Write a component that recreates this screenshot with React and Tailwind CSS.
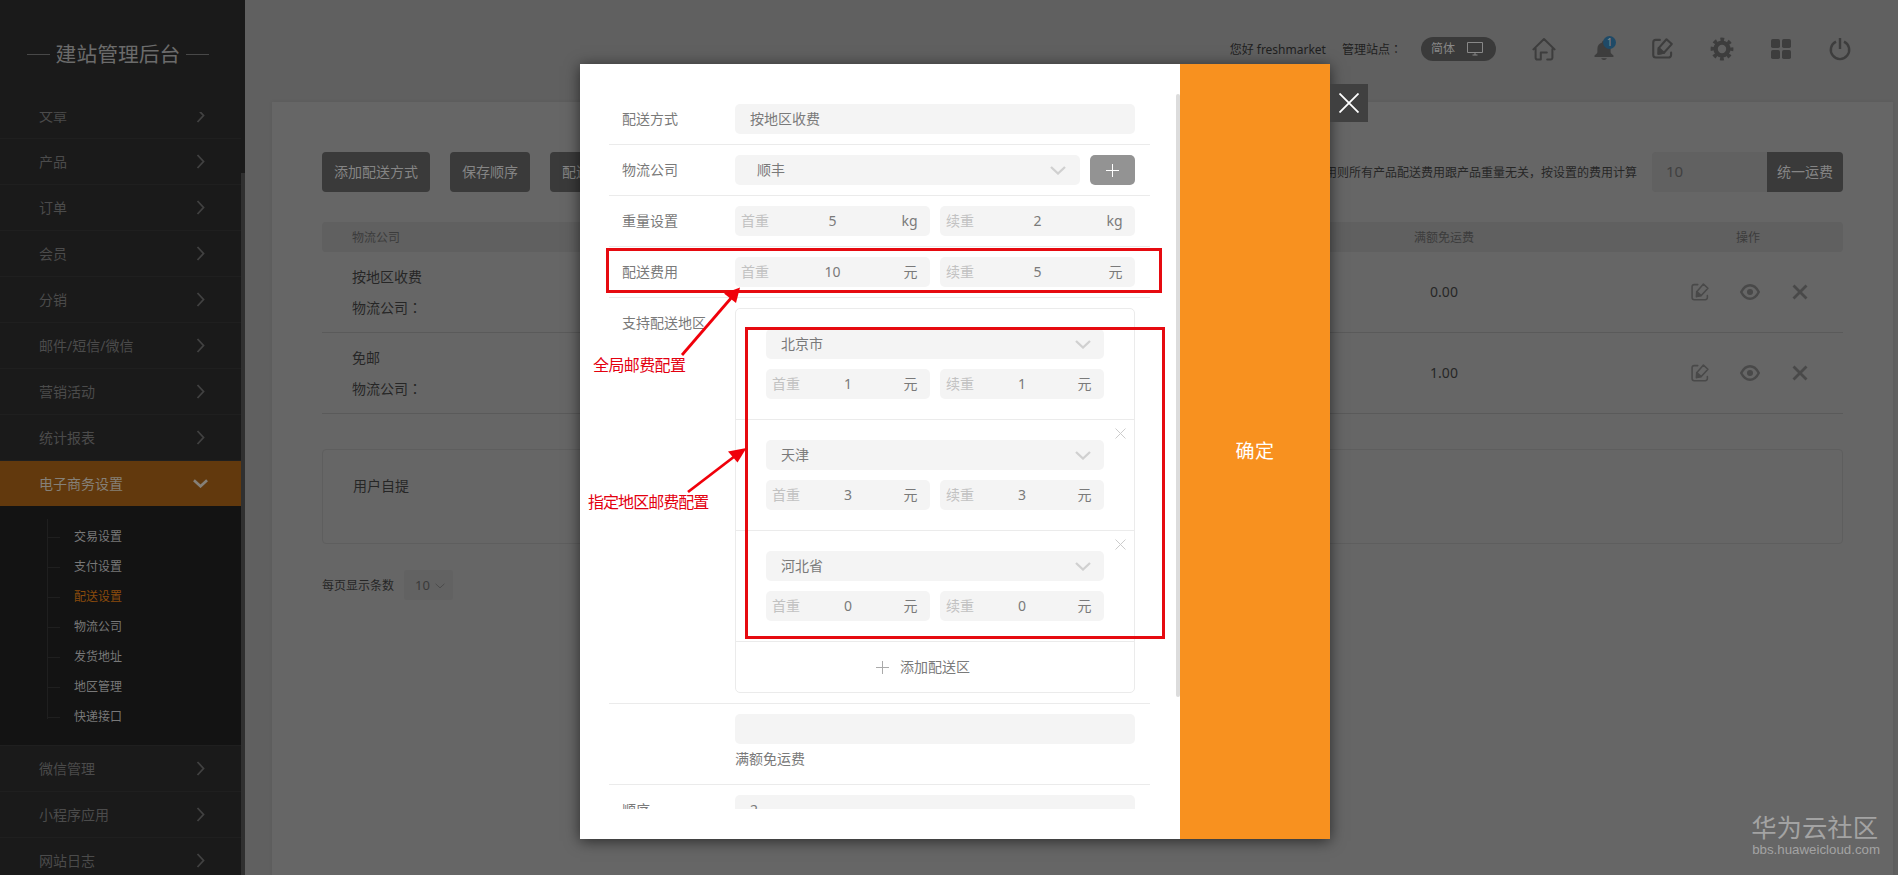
import React from "react";

const MENU_TOP = ["文章", "产品", "订单", "会员", "分销", "邮件/短信/微信", "营销活动", "统计报表"];
const SUB_MENU = ["交易设置", "支付设置", "配送设置", "物流公司", "发货地址", "地区管理", "快递接口"];
const MENU_BOTTOM = ["微信管理", "小程序应用", "网站日志"];

const METHODS = [
  { name: "按地区收费", free: "0.00" },
  { name: "免邮", free: "1.00" },
];

const REGIONS = [
  { name: "北京市", first: "1", next: "1", removable: false },
  { name: "天津", first: "3", next: "3", removable: true },
  { name: "河北省", first: "0", next: "0", removable: true },
];

function ChevronDown({ className }) {
  return (
    <svg className={className} viewBox="0 0 16 9" fill="none" stroke="currentColor">
      <path d="M1 1l7 6.500L15 1" />
    </svg>
  );
}

function Colon() {
  return <span className="font-['Noto_Sans_CJK_TC',sans-serif]">：</span>;
}

function EditIcon({ className }) {
  return (
    <svg className={className} viewBox="0 0 20 20" fill="none" stroke="currentColor" strokeLinejoin="round" strokeLinecap="round">
      <path d="M7.500 1.800H3.600a2.400 2.400 0 0 0-2.400 2.400v12a2.400 2.400 0 0 0 2.400 2.400h12a2.400 2.400 0 0 0 2.600-2.400v-2.400" />
      <path d="M13.800 1.200l5 4.600-7.400 8.200-5.200 1 .2-5.400z" />
      <path d="M6.400 9.600l5 4.400-5.200 1z" fill="currentColor" />
    </svg>
  );
}

function MenuItem({ label }) {
  return (
    <li className="flex h-[46px] shrink-0 items-center justify-between border-b border-[#1f1f1f] pl-[39px] pr-[36px] text-sm text-[#4b4b4b]">
      <span>{label}</span>
      <svg className="mb-px h-[15px] w-[9px]" viewBox="0 0 9 15" fill="none" stroke="#414141" strokeWidth="1.800">
        <path d="M1.500 1l6 6.500-6 6.500" />
      </svg>
    </li>
  );
}

function Sidebar() {
  return (
    <aside className="relative flex h-full w-[245px] shrink-0 flex-col bg-[#1a1a1a]">
      <div className="flex h-[112px] shrink-0 items-start pl-[27px] pt-[39px]">
        <div className="flex items-center text-[#6b6b6b]">
          <i className="h-px w-[23px] bg-[#484848]" />
          <h1 className="w-[136px] text-center text-[20.800px] leading-[30px]">建站管理后台</h1>
          <i className="h-px w-[23px] bg-[#484848]" />
        </div>
      </div>
      <div className="min-h-0 flex-1 overflow-hidden">
        <ul className="-mt-[19px] flex w-[241px] flex-col">
          {MENU_TOP.map((m) => (
            <MenuItem key={m} label={m} />
          ))}
          <li className="flex h-[45px] w-[245px] shrink-0 items-center justify-between bg-[#62390d] pl-[39px] pr-[37px] text-sm text-[#858078]">
            <span>电子商务设置</span>
            <ChevronDown className="h-[9px] w-[15px] stroke-[2.800]" />
          </li>
          <li className="h-[239px] shrink-0 bg-[#131313] pt-[16px]">
            <ul className="relative text-xs text-[#787878]">
              <i className="absolute left-[47px] top-[-3px] h-[200px] w-px bg-[#1f1f1f]" />
              {SUB_MENU.map((s) => (
                <li key={s} className="flex h-[30px] items-center pl-[48px]">
                  <i className="mr-[14px] h-px w-3 bg-[#1f1f1f]" />
                  <span className={s === "配送设置" ? "text-[#8a4b0c]" : ""}>{s}</span>
                </li>
              ))}
            </ul>
          </li>
          <li className="h-px shrink-0 bg-[#1f1f1f]" />
          {MENU_BOTTOM.map((m) => (
            <MenuItem key={m} label={m} />
          ))}
        </ul>
      </div>
      <i className="absolute bottom-0 right-0 top-[173px] w-1 bg-[#303030]" />
    </aside>
  );
}

function TopBar() {
  return (
    <header className="flex h-[99px] items-center justify-end pb-[2px] pr-[46px] text-[#3d3d3d]">
      <div className="flex items-center pt-[2px] text-xs text-[#202020]">
        <span>您好 freshmarket</span>
        <span className="ml-[16px]">管理站点<Colon /></span>
      </div>
      <div className="ml-[19px] flex h-6 w-[75px] items-center rounded-full bg-[#3a3a3a] pl-[10px] text-xs text-[#888]">
        <span>简体</span>
        <svg className="ml-[12px] h-[14px] w-[16px]" viewBox="0 0 16 14" fill="none" stroke="#888">
          <path d="M.5.5h15v10H.5zM5.500 13h5M8 10.500V13" />
        </svg>
      </div>
      <svg className="ml-[36px] h-6 w-6" viewBox="0 0 24 24" fill="none" stroke="currentColor" strokeWidth="2" strokeLinejoin="round" strokeLinecap="round">
        <path d="M3.600 11.600v9.200a1.800 1.800 0 0 0 1.800 1.800h3.400v-7h6M1.400 12.400L12 2l10.600 10.400M20.400 12v8.800a1.800 1.800 0 0 1-1.800 1.800h-3.400" />
      </svg>
      <div className="relative ml-[36px] h-6 w-6">
        <svg className="h-6 w-6" viewBox="0 0 24 24" fill="currentColor">
          <path d="M12 3.500a2 2 0 0 1 2 2c2.800.9 4.600 3.200 4.600 6.200v3.300c0 1 .8 1.700 2.600 3.200.6.600.6 1.800-.2 1.800H3c-.8 0-.8-1.200-.2-1.800 1.800-1.500 2.600-2.200 2.600-3.200v-3.300c0-3 1.800-5.300 4.600-6.200a2 2 0 0 1 2-2zM9.200 21.200h5.600c-.5 1-1.500 1.700-2.800 1.700s-2.300-.7-2.800-1.700z" />
        </svg>
        <span className="absolute left-[11px] top-[-1px] flex h-[13px] w-[13px] items-center justify-center rounded-full bg-[#1f4a67] text-[10px] leading-none text-[#8a8a8a]">1</span>
      </div>
      <EditIcon className="ml-[36px] h-[21px] w-[21px] stroke-2" />
      <svg className="ml-[37px] h-6 w-6" viewBox="0 0 24 24" fill="none" stroke="currentColor">
        <circle cx="12" cy="12" r="6.400" strokeWidth="4.400" />
        <circle cx="12" cy="12" r="9.600" strokeWidth="3.600" strokeDasharray="3.770 3.770" strokeDashoffset="1.900" />
      </svg>
      <svg className="ml-[35px] h-6 w-6" viewBox="0 0 24 24" fill="currentColor">
        <rect x="2" y="2" width="9" height="9" rx="1.800" />
        <rect x="13" y="2" width="9" height="9" rx="1.800" />
        <rect x="2" y="13" width="9" height="9" rx="1.800" />
        <rect x="13" y="13" width="9" height="9" rx="1.800" />
      </svg>
      <svg className="ml-[35px] h-6 w-6" viewBox="0 0 24 24" fill="none" stroke="currentColor" strokeWidth="2.400">
        <path d="M8 4.600a9.200 9.200 0 1 0 8 0M12 1v11" />
      </svg>
    </header>
  );
}

function Toolbar() {
  return (
    <div className="flex h-10 items-stretch justify-between text-sm">
      <div className="flex gap-5 text-[#858585]">
        <button className="w-[108px] rounded-[4px] bg-[#3a3a3a]">添加配送方式</button>
        <button className="w-[80px] rounded-[4px] bg-[#3a3a3a]">保存顺序</button>
        <button className="w-[52px] rounded-[4px] bg-[#3a3a3a]">配送</button>
      </div>
      <div className="flex items-center">
        <span className="pt-px text-xs text-[#262626]">用则所有产品配送费用跟产品重量无关，按设置的费用计算</span>
        <span className="ml-[15px] flex h-10 w-[115px] items-center rounded-l-[4px] bg-[#616161] pl-[14px] text-[15px] text-[#404040]">10</span>
        <button className="h-10 w-[76px] rounded-r-[4px] bg-[#3a3a3a] text-[#858585]">统一运费</button>
      </div>
    </div>
  );
}

function MainPanel() {
  return (
    <main className="relative ml-[27px] mt-[3px] h-[773px] w-[1621px] bg-[#666] pl-[50px] pr-[50px] pt-[50px] shadow-[0_0_4px_rgba(0,0,0,0.07)]">
      <Toolbar />
      <div className="mt-[30px] flex h-[30px] items-center rounded-[4px] bg-[#606060] pl-[30px] pt-px text-xs text-[#3c3c3c]">
        <span className="w-[942px]">物流公司</span>
        <span className="w-[300px] text-center">满额免运费</span>
        <span className="ml-[60px] w-[188px] text-center">操作</span>
      </div>
      {METHODS.map((m) => (
        <div key={m.name} className="flex h-[81px] items-center border-b border-[#5a5a5a] pl-[30px] text-sm text-[#262626]">
          <div className="w-[942px] leading-[30px]">
            <p>{m.name}</p>
            <p>物流公司<Colon /></p>
          </div>
          <span className="w-[300px] text-center">{m.free}</span>
          <div className="ml-[97px] flex items-center text-[#494949]">
            <EditIcon className="h-[18px] w-[18px] stroke-[1.700]" />
            <svg className="ml-[31px] h-[18px] w-5" viewBox="0 0 20 18" fill="none" stroke="currentColor" strokeWidth="2.400">
              <path d="M1.200 9C3.500 4.500 6.500 2.200 10 2.200S16.500 4.500 18.800 9c-2.300 4.500-5.300 6.800-8.800 6.800S3.500 13.500 1.200 9z" />
              <circle cx="10" cy="9" r="3" fill="currentColor" stroke="none" />
            </svg>
            <svg className="ml-[32px] h-[16px] w-4" viewBox="0 0 16 16" fill="none" stroke="currentColor" strokeWidth="2.800">
              <path d="M1.500 1.500l13 13M14.500 1.500l-13 13" />
            </svg>
          </div>
        </div>
      ))}
      <div className="mt-[35px] h-[95px] rounded-[4px] border border-[#5e5e5e] pl-[30px] pt-[26px] text-sm text-[#262626]">用户自提</div>
      <div className="mt-[26px] flex items-center text-xs text-[#262626]">
        <span className="pt-px">每页显示条数</span>
        <span className="ml-[10px] flex h-[30px] w-[49px] items-center rounded-[3px] bg-[#626262] pl-[11px] pt-px text-[13px] text-[#3a3a3a]">
          10
          <ChevronDown className="ml-[5px] h-[6px] w-[10px] stroke-[1.600] text-[#4c4c4c]" />
        </span>
      </div>
      <div className="absolute right-[13px] top-[708px] text-[#a3a3a3]">
        <p className="text-[25.400px] leading-[34px]">华为云社区</p>
        <p className="pl-px pt-px font-['Liberation_Sans',sans-serif] text-[13.300px] leading-[10px]">bbs.huaweicloud.com</p>
      </div>
    </main>
  );
}

function Amount({ label, value, unit, wide }) {
  return (
    <div className="flex h-[30px] flex-1 items-center rounded-[5px] bg-[#f4f4f4] pl-[6px] pr-[12.500px]">
      <span className="text-[#c2c2c2]">{label}</span>
      <span className={wide ? "w-[127px] text-center" : "w-[96px] text-center"}>{value}</span>
      <span className="ml-auto">{unit}</span>
    </div>
  );
}

function Row({ label, last, children }) {
  return (
    <div className={"flex pl-[13px] py-[10px] " + (last ? "" : "border-b border-[#ebebeb]")}>
      <span className="w-[113px] shrink-0 whitespace-nowrap leading-[30px]">{label}</span>
      <div className="w-[400px]">{children}</div>
    </div>
  );
}

function Modal() {
  return (
    <section className="absolute left-[580px] top-[64px] flex h-[775px] w-[750px] text-sm text-[#7a7a7a] shadow-[0_2px_14px_rgba(0,0,0,0.6)]">
      <div className="relative w-[600px] bg-white pt-[30px]">
        <div className="ml-[29px] h-[715px] w-[541px] overflow-hidden">
          <Row label="配送方式">
            <div className="flex h-[30px] items-center rounded-[5px] bg-[#f4f4f4] pl-[15px]">按地区收费</div>
          </Row>
          <Row label="物流公司">
            <div className="flex gap-[10px]">
              <div className="flex h-[30px] w-[345px] items-center justify-between rounded-[5px] bg-[#f4f4f4] pl-[22px] pr-[14px]">
                <span>顺丰</span>
                <ChevronDown className="h-[9px] w-4 stroke-[2.300] text-[#d0d0d0]" />
              </div>
              <button className="flex h-[30px] w-[45px] items-center justify-center rounded-[5px] bg-[#939393]">
                <svg className="h-[13px] w-[13px]" viewBox="0 0 13 13" stroke="#fff">
                  <path d="M6.500 0v13M0 6.500h13" />
                </svg>
              </button>
            </div>
          </Row>
          <Row label="重量设置">
            <div className="flex gap-[10px]">
              <Amount label="首重" value="5" unit="kg" wide />
              <Amount label="续重" value="2" unit="kg" wide />
            </div>
          </Row>
          <Row label="配送费用">
            <div className="flex gap-[10px]">
              <Amount label="首重" value="10" unit="元" wide />
              <Amount label="续重" value="5" unit="元" wide />
            </div>
          </Row>
          <Row label="支持配送地区">
            <div className="rounded-[5px] border border-[#ebebeb]">
              {REGIONS.map((r) => (
                <div key={r.name} className="relative flex flex-col gap-[10px] border-b border-[#ebebeb] px-[30px] py-[20px]">
                  <div className="flex h-[30px] items-center justify-between rounded-[5px] bg-[#f4f4f4] pl-[15px] pr-[13px]">
                    <span>{r.name}</span>
                    <ChevronDown className="h-[9px] w-4 stroke-[2.300] text-[#d0d0d0]" />
                  </div>
                  <div className="flex gap-[10px]">
                    <Amount label="首重" value={r.first} unit="元" />
                    <Amount label="续重" value={r.next} unit="元" />
                  </div>
                  {r.removable && (
                    <svg className="absolute right-[8px] top-[8px] h-[11px] w-[11px]" viewBox="0 0 11 11" stroke="#ccc">
                      <path d="M.5.5l10 10M10.500.5l-10 10" />
                    </svg>
                  )}
                </div>
              ))}
              <div className="flex h-[50px] items-center pl-[140px]">
                <svg className="h-[13px] w-[13px]" viewBox="0 0 13 13" stroke="#aaa">
                  <path d="M6.500 0v13M0 6.500h13" />
                </svg>
                <span className="ml-[11px]">添加配送区</span>
              </div>
            </div>
          </Row>
          <Row label="">
            <div className="h-[60px]">
              <div className="h-[30px] rounded-[5px] bg-[#f4f4f4]" />
              <p className="leading-[30px]">满额免运费</p>
            </div>
          </Row>
          <Row label="顺序" last>
            <div className="flex h-[30px] items-center rounded-[5px] bg-[#f4f4f4] pl-[15px]">2</div>
          </Row>
        </div>
        <i className="absolute right-0 top-[30px] h-[603px] w-1 rounded bg-[#dcdcdc]" />
      </div>
      <button className="w-[150px] bg-[#f8911f] pt-px text-[19px] tracking-[0.500px] text-white">确定</button>
      <button className="absolute left-full top-[20px] flex h-[38px] w-[38px] items-center justify-center bg-[#404040]">
        <svg className="h-5 w-5" viewBox="0 0 20 20" stroke="#fff" strokeWidth="1.800">
          <path d="M.5.5l19 19M19.500.5l-19 19" />
        </svg>
      </button>
    </section>
  );
}

function Annotations() {
  return (
    <div className="pointer-events-none absolute inset-0 text-[#e3000f]">
      <div className="absolute left-[606px] top-[248px] h-[45px] w-[556px] border-[3px] border-[#e60a10]" />
      <div className="absolute left-[745px] top-[327px] h-[312px] w-[420px] border-[3px] border-[#e60a10]" />
      <svg className="absolute left-[670px] top-[280px] h-[220px] w-[90px]" viewBox="670 280 90 220" fill="#f0000a" stroke="#f0000a">
        <path d="M682 355L732 297" strokeWidth="2.800" />
        <path d="M740 287.500L724 293.500l12 9.500z" stroke="none" />
        <path d="M688 492l47-36" strokeWidth="2.800" />
        <path d="M746.500 448l-18.500 3.500 9.500 11z" stroke="none" />
      </svg>
      <span className="absolute left-[593px] top-[353px] whitespace-nowrap text-base leading-6 tracking-[-0.600px]">全局邮费配置</span>
      <span className="absolute left-[588px] top-[490px] whitespace-nowrap text-base leading-6 tracking-[-0.950px]">指定地区邮费配置</span>
    </div>
  );
}

export default function App() {
  return (
    <div className="relative flex h-[875px] w-[1898px] overflow-hidden bg-[#606060] font-['Noto_Sans','Noto_Sans_CJK_SC',sans-serif]">
      <Sidebar />
      <div className="flex min-w-0 flex-1 flex-col">
        <TopBar />
        <MainPanel />
      </div>
      <Modal />
      <Annotations />
    </div>
  );
}
